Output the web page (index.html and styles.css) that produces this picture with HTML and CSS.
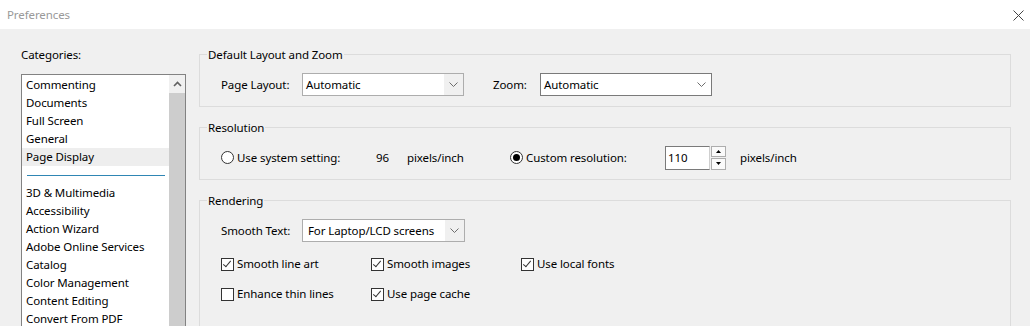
FILE: index.html
```html
<!DOCTYPE html>
<html lang="en">
  <head>
    <meta charset="UTF-8" />
    <title>Preferences</title>
    <link rel="stylesheet" href="styles.css">
  </head>
  <body>
    <div class="titlebar">
      <span class="title">Preferences</span>
      <svg class="close" width="11" height="11" viewBox="0 0 11 11">
        <path d="M0.5 0.5 L10.5 10.5 M10.5 0.5 L0.5 10.5" stroke="#444" stroke-width="1" fill="none" />
      </svg>
    </div>

    <div class="main">
      <div class="sidebar">
        <div class="cat-label">Categories:</div>
        <div class="listbox">
          <ul class="items">
            <li>Commenting</li>
            <li>Documents</li>
            <li>Full Screen</li>
            <li>General</li>
            <li class="selected">Page Display</li>
            <li class="separator"></li>
            <li>3D &amp; Multimedia</li>
            <li>Accessibility</li>
            <li>Action Wizard</li>
            <li>Adobe Online Services</li>
            <li>Catalog</li>
            <li>Color Management</li>
            <li>Content Editing</li>
            <li>Convert From PDF</li>
          </ul>
          <div class="scrollbar">
            <div class="scroll-btn">
              <svg width="9" height="6" viewBox="0 0 9 6">
                <path d="M1 5 L4.5 1.5 L8 5" stroke="#606060" stroke-width="1.6" fill="none" />
              </svg>
            </div>
            <div class="thumb"></div>
          </div>
        </div>
      </div>

      <div class="panel">
        <fieldset class="group">
          <legend>Default Layout and Zoom</legend>
          <div class="row">
            <span class="field-label">Page Layout:</span>
            <div class="select page-layout">
              <span class="value">Automatic</span>
              <span class="drop">
                <svg width="9" height="5" viewBox="0 0 9 5"><path d="M0.5 0.5 L4.5 4.5 L8.5 0.5" stroke="#6d6d6d" fill="none" /></svg>
              </span>
            </div>
            <span class="field-label zoom-label">Zoom:</span>
            <div class="select zoom">
              <span class="value">Automatic</span>
              <span class="drop">
                <svg width="9" height="5" viewBox="0 0 9 5"><path d="M0.5 0.5 L4.5 4.5 L8.5 0.5" stroke="#6d6d6d" fill="none" /></svg>
              </span>
            </div>
          </div>
        </fieldset>

        <fieldset class="group">
          <legend>Resolution</legend>
          <div class="row">
            <span class="option res-opt">
              <span class="radio"></span>
              <span>Use system setting:</span>
            </span>
            <span class="res-value">96</span>
            <span class="res-unit">pixels/inch</span>
            <span class="option res-opt">
              <span class="radio checked"></span>
              <span>Custom resolution:</span>
            </span>
            <span class="number-input">110</span>
            <span class="spinner">
              <span class="spin-btn">
                <svg width="5" height="3" viewBox="0 0 5 3"><path d="M0 3 L2.5 0 L5 3 Z" fill="#000" /></svg>
              </span>
              <span class="spin-btn">
                <svg width="5" height="3" viewBox="0 0 5 3"><path d="M0 0 L2.5 3 L5 0 Z" fill="#000" /></svg>
              </span>
            </span>
            <span class="unit-after">pixels/inch</span>
          </div>
        </fieldset>

        <fieldset class="group rendering">
          <legend>Rendering</legend>
          <div class="row">
            <span class="field-label">Smooth Text:</span>
            <div class="select smooth-text">
              <span class="value">For Laptop/LCD screens</span>
              <span class="drop">
                <svg width="9" height="5" viewBox="0 0 9 5"><path d="M0.5 0.5 L4.5 4.5 L8.5 0.5" stroke="#6d6d6d" fill="none" /></svg>
              </span>
            </div>
          </div>
          <div class="checks">
            <span class="option"><span class="checkbox checked"></span>Smooth line art</span>
            <span class="option"><span class="checkbox checked"></span>Smooth images</span>
            <span class="option"><span class="checkbox checked"></span>Use local fonts</span>
            <span class="option"><span class="checkbox"></span>Enhance thin lines</span>
            <span class="option"><span class="checkbox checked"></span>Use page cache</span>
          </div>
        </fieldset>
      </div>
    </div>
  </body>
</html>
```

FILE: styles.css
```css
html,
body {
  margin: 0;
  height: 326px;
  overflow: hidden;
}

body {
  font-family: "Noto Sans", sans-serif;
  font-size: 11.5px;
  letter-spacing: -0.1px;
  color: #000;
  background: #f0f0f0;
}

.titlebar {
  height: 29px;
  background: #fff;
  display: flex;
  align-items: center;
  justify-content: space-between;
  padding: 0 6px 0 7px;
}

.title {
  color: #999;
}

.close {
  margin-top: 1px;
}

.main {
  display: flex;
  gap: 13px;
  padding: 0 19px 0 21px;
}

.sidebar {
  width: 165px;
  flex: none;
}

.cat-label {
  margin-top: 18px;
  line-height: 16px;
}

.listbox {
  margin-top: 11px;
  height: 300px;
  border: 1px solid #828282;
  background: #fff;
  display: flex;
}

.items {
  list-style: none;
  margin: 0;
  padding: 1px 0 0;
  flex: 1;
}

.items li {
  height: 18px;
  line-height: 18px;
  padding-left: 4px;
  white-space: nowrap;
}

.items li.selected {
  background: #eeeeee;
}

.items li.separator {
  display: flex;
  align-items: center;
  padding: 0 4px 0 5px;
}

.items li.separator::after {
  content: "";
  flex: 1;
  height: 1px;
  background: #2f86b4;
}

.scrollbar {
  width: 16px;
  display: flex;
  flex-direction: column;
  background: #f0f0f0;
}

.scroll-btn {
  height: 18px;
  display: flex;
  align-items: center;
  justify-content: center;
}

.thumb {
  flex: 1;
  background: #cdcdcd;
}

.panel {
  flex: 1;
  padding-top: 17px;
}

.group {
  margin: 0 0 12px;
  padding: 0 0 10px 7px;
  border: 1px solid #dcdcdc;
  min-inline-size: 0;
}

.group legend {
  padding: 0 1px;
  line-height: 17px;
}

.row {
  display: flex;
  align-items: center;
  height: 23px;
  margin-top: 10px;
  padding-left: 14px;
}

.field-label {
  width: 81px;
  flex: none;
}

.zoom-label {
  width: 47px;
  margin-left: 29px;
}

.select {
  display: flex;
  height: 23px;
  box-sizing: border-box;
  border: 1px solid #adadad;
  background: #fff;
}

.select .value {
  flex: 1;
  line-height: 21px;
  padding-left: 3px;
  white-space: nowrap;
}

.select .drop {
  width: 19px;
  display: flex;
  align-items: center;
  justify-content: center;
  background: #f0f0f0;
}

.page-layout {
  width: 162px;
}

.smooth-text {
  width: 163px;
}

.smooth-text .value {
  padding-left: 5px;
}

.zoom {
  width: 172px;
  border-color: #7a7a7a;
}

.zoom .drop {
  background: #fff;
  width: 20px;
}

.option {
  display: flex;
  align-items: center;
  gap: 3px;
  white-space: nowrap;
}

.res-opt {
  width: 155px;
  flex: none;
}

.res-value {
  width: 31px;
  flex: none;
}

.res-unit {
  width: 103px;
  flex: none;
}

.radio {
  width: 13px;
  height: 13px;
  box-sizing: border-box;
  border: 1px solid #333;
  border-radius: 50%;
  background: #fff;
  display: flex;
  align-items: center;
  justify-content: center;
  flex: none;
}

.radio.checked::after {
  content: "";
  width: 7px;
  height: 7px;
  border-radius: 50%;
  background: #000;
}

.number-input {
  width: 45px;
  height: 24px;
  box-sizing: border-box;
  border: 1px solid #7a7a7a;
  border-right-color: #cfcfcf;
  background: #fff;
  line-height: 22px;
  padding-left: 2px;
  flex: none;
}

.spinner {
  margin-left: 1px;
  width: 15px;
  height: 24px;
  display: flex;
  flex-direction: column;
  gap: 1px;
  flex: none;
}

.spin-btn {
  flex: 1;
  box-sizing: border-box;
  border: 1px solid #adadad;
  background: #fafafa;
  display: flex;
  align-items: center;
  justify-content: center;
}

.unit-after {
  margin-left: 14px;
}

.checks {
  display: grid;
  grid-template-columns: repeat(3, 150px);
  row-gap: 14px;
  margin-top: 14px;
  padding-left: 14px;
  line-height: 16px;
}

.checkbox {
  width: 13px;
  height: 13px;
  box-sizing: border-box;
  border: 1px solid #333;
  background: #fff;
  flex: none;
  position: relative;
}

.checkbox.checked::after {
  content: "";
  position: absolute;
  left: 3px;
  top: 0px;
  width: 3px;
  height: 7px;
  border: solid #333;
  border-width: 0 1px 1px 0;
  transform: rotate(40deg);
}

.rendering {
  height: 200px;
}
```
